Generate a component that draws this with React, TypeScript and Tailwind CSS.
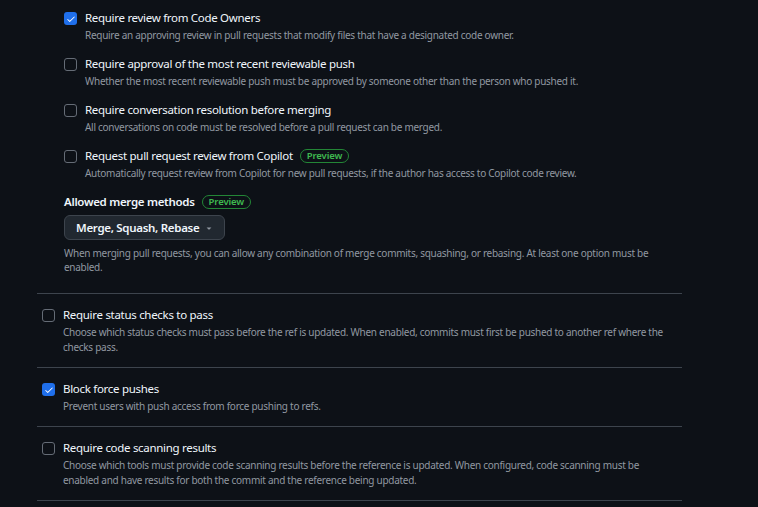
import { ReactNode } from "react";

function Checkbox({ checked }: { checked?: boolean }) {
  if (checked) {
    return (
      <span className="mt-[3px] flex h-[13px] w-[13px] shrink-0 items-center justify-center rounded-[3px] bg-[#1f6feb]">
        <svg viewBox="0 0 16 16" className="h-[10px] w-[10px]" fill="#ffffff">
          <path d="M13.78 4.22a.75.75 0 0 1 0 1.06l-7.25 7.25a.75.75 0 0 1-1.06 0L2.22 9.28a.751.751 0 0 1 .018-1.042.751.751 0 0 1 1.042-.018L6 10.94l6.72-6.72a.75.75 0 0 1 1.06 0Z" />
        </svg>
      </span>
    );
  }
  return <span className="mt-[3px] h-[13px] w-[13px] shrink-0 rounded-[3px] border border-[#656c76]" />;
}

function Preview() {
  return (
    <span className="inline-flex h-[14px] items-center rounded-full border border-[#238636] px-[6px] text-[9.5px] font-semibold leading-none tracking-[-0.1px] text-[#3fb950]">
      Preview
    </span>
  );
}

function Option({
  checked,
  title,
  badge,
  children,
}: {
  checked?: boolean;
  title: string;
  badge?: boolean;
  children: ReactNode;
}) {
  return (
    <div className="flex gap-[8px]">
      <Checkbox checked={checked} />
      <div>
        <div className="flex items-center gap-[7px] text-[11.5px] leading-[18px] tracking-[-0.3px] text-[#f0f6fc]">
          {title}
          {badge && <Preview />}
        </div>
        <p className="mt-px w-[602px] text-[10px] leading-[15px] tracking-[-0.28px] text-[#9198a1]">{children}</p>
      </div>
    </div>
  );
}

export default function App() {
  return (
    <div
      className="h-[507px] w-[758px] overflow-hidden bg-[#0d1117]"
      style={{ fontFamily: '"Noto Sans", "Segoe UI", sans-serif' }}
    >
      <div className="ml-[37px] w-[645px]">
        <div className="flex flex-col gap-[12px] pl-[27px] pt-[9px]">
          <Option checked title="Require review from Code Owners">
            Require an approving review in pull requests that modify files that have a designated code owner.
          </Option>
          <Option title="Require approval of the most recent reviewable push">
            Whether the most recent reviewable push must be approved by someone other than the person who pushed it.
          </Option>
          <Option title="Require conversation resolution before merging">
            All conversations on code must be resolved before a pull request can be merged.
          </Option>
          <Option title="Request pull request review from Copilot" badge>
            Automatically request review from Copilot for new pull requests, if the author has access to Copilot code review.
          </Option>
          <div>
            <div className="flex items-center gap-[7px] text-[11.5px] font-semibold leading-[18px] tracking-[-0.3px] text-[#f0f6fc]">
              Allowed merge methods
              <Preview />
            </div>
            <button className="mt-[4px] flex h-[25px] w-[161px] items-center justify-between whitespace-nowrap rounded-[6px] border border-[#3d444d] bg-[#212830] pl-[11px] pr-[10px] text-[11.5px] font-semibold tracking-[-0.3px] text-[#f0f6fc]">
              Merge, Squash, Rebase
              <svg viewBox="0 0 16 16" className="h-[10px] w-[10px]" fill="#9198a1">
                <path d="m4.427 7.427 3.396 3.396a.25.25 0 0 0 .354 0l3.396-3.396A.25.25 0 0 0 11.396 7H4.604a.25.25 0 0 0-.177.427Z" />
              </svg>
            </button>
            <p className="mt-[6px] w-[590px] text-[10px] leading-[14px] tracking-[-0.28px] text-[#9198a1]">
              When merging pull requests, you can allow any combination of merge commits, squashing, or rebasing. At least one option must be enabled.
            </p>
          </div>
        </div>

        <div className="mt-[19px] border-t border-[#3d444d]">
          <div className="border-b border-[#3d444d] py-[12px] pl-[5px]">
            <Option title="Require status checks to pass">
              Choose which status checks must pass before the ref is updated. When enabled, commits must first be pushed to another ref where the checks pass.
            </Option>
          </div>
          <div className="border-b border-[#3d444d] py-[12px] pl-[5px]">
            <Option checked title="Block force pushes">
              Prevent users with push access from force pushing to refs.
            </Option>
          </div>
          <div className="border-b border-[#3d444d] py-[12px] pl-[5px]">
            <Option title="Require code scanning results">
              Choose which tools must provide code scanning results before the reference is updated. When configured, code scanning must be enabled and have results for both the commit and the reference being updated.
            </Option>
          </div>
        </div>
      </div>
    </div>
  );
}
